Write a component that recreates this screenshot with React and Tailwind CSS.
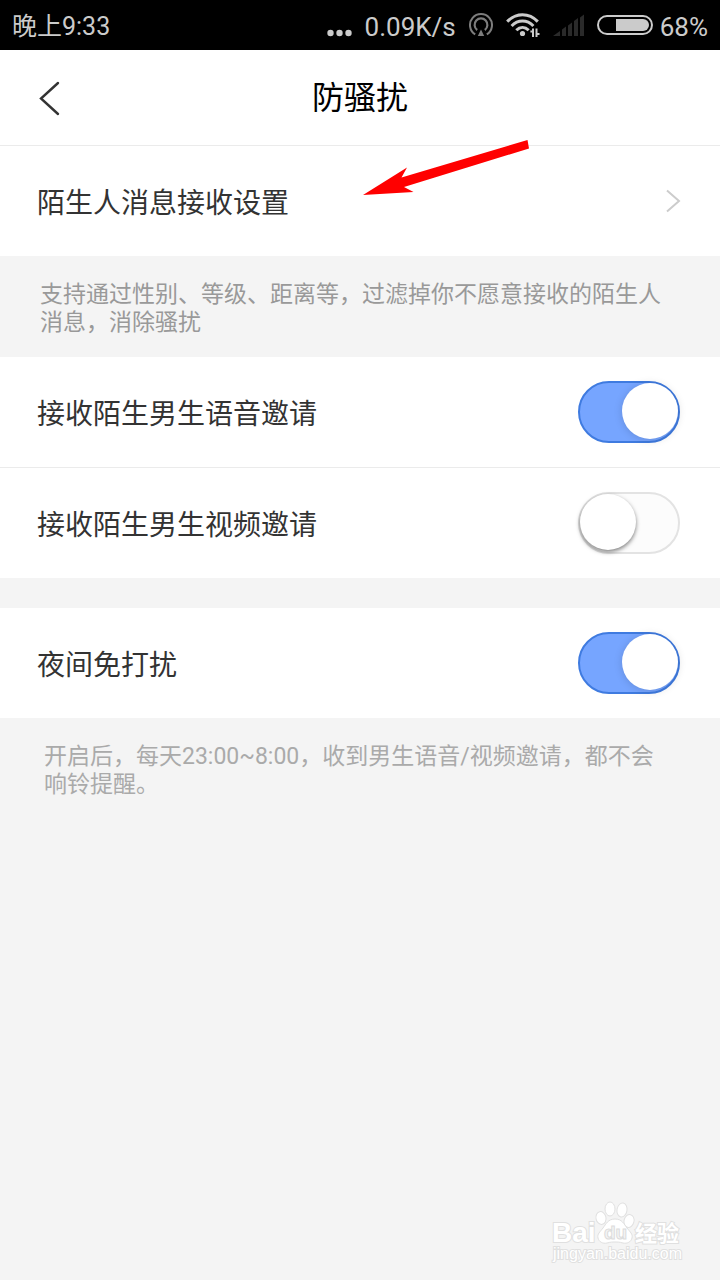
import React, { useState } from 'react';

const StatusBar = () => (
    <div className="flex h-[50px] items-center justify-between bg-black px-3 text-[#cbcbcb] whitespace-nowrap">
        <span className="pt-1 text-[25px] leading-8">晚上9:33</span>
        <div className="flex items-center gap-[13px] text-[26px] leading-8">
            <svg width="25" height="50" viewBox="0 0 25 50" fill="#cbcbcb">
                <circle cx="3.5" cy="33" r="3.2" />
                <circle cx="12.5" cy="33" r="3.2" />
                <circle cx="21.5" cy="33" r="3.2" />
            </svg>
            <span className="pt-1">0.09K/s</span>
            <svg width="24" height="50" viewBox="0 0 24 50" fill="none" stroke="#7d7d7d" strokeWidth="2">
                <path d="M6.2 34.4A11 11 0 1 1 17.8 34.4" />
                <path d="M8.2 30A6.4 6.4 0 1 1 15.8 30" strokeWidth="2.2" />
                <path d="M12 29.5l3.2 6.5H8.8z" fill="#7d7d7d" stroke="none" />
            </svg>
            <svg width="34" height="50" viewBox="0 0 34 50" fill="none" stroke="#cbcbcb" strokeWidth="3">
                <path d="M1.2 21.6C10 12.4 23 12.4 31.8 21.6" />
                <path d="M5.6 26C12 19.4 21 19.4 27.4 26" />
                <path d="M10.3 30.3C14 26.6 19 26.6 22.7 30.3" />
                <circle cx="16.5" cy="33.5" r="2.6" fill="#cbcbcb" stroke="none" />
                <path d="M26 31.5h-1.6M27 28.5v8.5M30.5 28.5v8.5M31 34h2.5" strokeWidth="2" />
            </svg>
            <svg width="31" height="50" viewBox="0 0 31 50" fill="#2a2a2a">
                <path d="M0 36l7-5v5z" />
                <path d="M9 29.500l4-3v9.500h-4z" />
                <path d="M15 25.500l4-3v13.500h-4z" />
                <path d="M21 21l4-3v18h-4z" />
                <path d="M27 17.500l4-3v21.500h-4z" />
            </svg>
            <div className="flex items-center gap-[7px]">
                <svg width="56" height="50" viewBox="0 0 56 50">
                    <rect x="1" y="16" width="54" height="18" rx="9" fill="none" stroke="#cbcbcb" strokeWidth="2" />
                    <path d="M19 19h27a6 6 0 0 1 0 12H19z" fill="#cbcbcb" />
                </svg>
                <span className="pt-1">68%</span>
            </div>
        </div>
    </div>
);

const Header = ({ title }) => (
    <header className="grid h-24 grid-cols-[1fr_auto_1fr] items-center border-b border-[#ebebeb] bg-white px-[38px]">
        <button type="button" aria-label="返回" className="w-6">
            <svg width="24" height="36" viewBox="0 0 24 36" fill="none" stroke="#333" strokeWidth="2.400" strokeLinecap="round">
                <path d="M20 3L3 18.500L20 34" />
            </svg>
        </button>
        <h1 className="text-[32px] leading-[48px] text-black">{title}</h1>
    </header>
);

const SwitchRow = ({ id, label, defaultChecked = false }) => {
    const [checked, setChecked] = useState(defaultChecked);

    return (
        <div className="flex h-[110px] items-center justify-between bg-white pr-10 pl-[37px]">
            <label htmlFor={id} className="pt-1.5 text-[28px] leading-10 text-[#333]">{label}</label>
            <input
                id={id}
                type="checkbox"
                role="switch"
                checked={checked}
                onChange={(e) => setChecked(e.target.checked)}
                className="h-[62px] w-[102px] shrink-0 appearance-none rounded-full border-2 border-[#e3e3e3] bg-[#fcfcfc] before:block before:size-14 before:rounded-full before:bg-white before:shadow-[0_2px_4px_rgba(0,0,0,0.5)] before:content-[''] checked:border-[#3f7be0] checked:bg-[#76a5ff] checked:before:ml-[42px] checked:before:shadow-[0_1px_8px_rgba(0,0,0,0.15)]"
            />
        </div>
    );
};

const Watermark = () => (
    <svg className="mt-auto mr-[34px] mb-3 self-end" width="136" height="68" viewBox="0 0 136 68" fill="#fff" stroke="#e0e0e0">
        <g fontFamily="'Liberation Sans', 'Noto Sans CJK SC', sans-serif" paintOrder="stroke" strokeWidth="2">
            <text x="2" y="42" fontSize="28" fontWeight="700">Bai</text>
            <text x="85" y="41" fontSize="22" fontWeight="700">经验</text>
            <text x="3" y="59" fontSize="16">jingyan.baidu.com</text>
        </g>
        <ellipse cx="51" cy="18" rx="5" ry="6.500" transform="rotate(-12 51 18)" />
        <ellipse cx="60" cy="9" rx="5" ry="7" />
        <ellipse cx="72" cy="10" rx="5" ry="7" transform="rotate(10 72 10)" />
        <ellipse cx="79" cy="21" rx="5" ry="6.500" transform="rotate(14 79 21)" />
        <path d="M65 19c7 0 9 5 12 9s6 6 5 10-5 6-9 5-5-1-8-1-4 0-8 1-8-1-9-5 2-6 5-10 5-9 12-9z" />
        <text x="54" y="39" fontSize="19" fontWeight="700" fill="#f4f4f4" stroke="#dcdcdc" fontFamily="'Liberation Sans', sans-serif">du</text>
    </svg>
);

const App = () => (
    <div className="relative flex min-h-screen flex-col bg-[#f4f4f4] font-[Roboto,'Noto_Sans_CJK_SC',sans-serif]">
        <StatusBar />
        <Header title="防骚扰" />

        <main>
            <a href="#stranger" className="flex h-[110px] items-center justify-between bg-white pr-[39px] pl-[37px] text-[28px] leading-10 text-[#333]">
                <span className="pt-1.5">陌生人消息接收设置</span>
                <svg width="16" height="24" viewBox="0 0 16 24" fill="none" stroke="#ccc" strokeWidth="2">
                    <path d="M2 1.500L14 12L2 22.500" />
                </svg>
            </a>
            <p className="pt-[25px] pr-7 pb-5 pl-10 text-[23px] leading-7 text-[#999]">
                支持通过性别、等级、距离等，过滤掉你不愿意接收的陌生人<br />消息，消除骚扰
            </p>

            <SwitchRow id="voice" label="接收陌生男生语音邀请" defaultChecked />
            <div className="h-px bg-[#ebebeb]" />
            <SwitchRow id="video" label="接收陌生男生视频邀请" />

            <div className="mt-[30px]">
                <SwitchRow id="night" label="夜间免打扰" defaultChecked />
            </div>
            <p className="pt-[25px] pr-7 pb-5 pl-11 text-[23px] leading-7 text-[#aaa]">
                开启后，每天23:00~8:00，收到男生语音/视频邀请，都不会<br />响铃提醒。
            </p>
        </main>

        <Watermark />

        <svg className="pointer-events-none absolute top-[138px] left-[360px]" width="172" height="60" viewBox="0 0 172 60" fill="#f00">
            <path d="M3 57L47 29.500L41.500 39.500L167.500 2L169 10.500L44 49L53.500 54z" />
        </svg>
    </div>
);

export default App;
